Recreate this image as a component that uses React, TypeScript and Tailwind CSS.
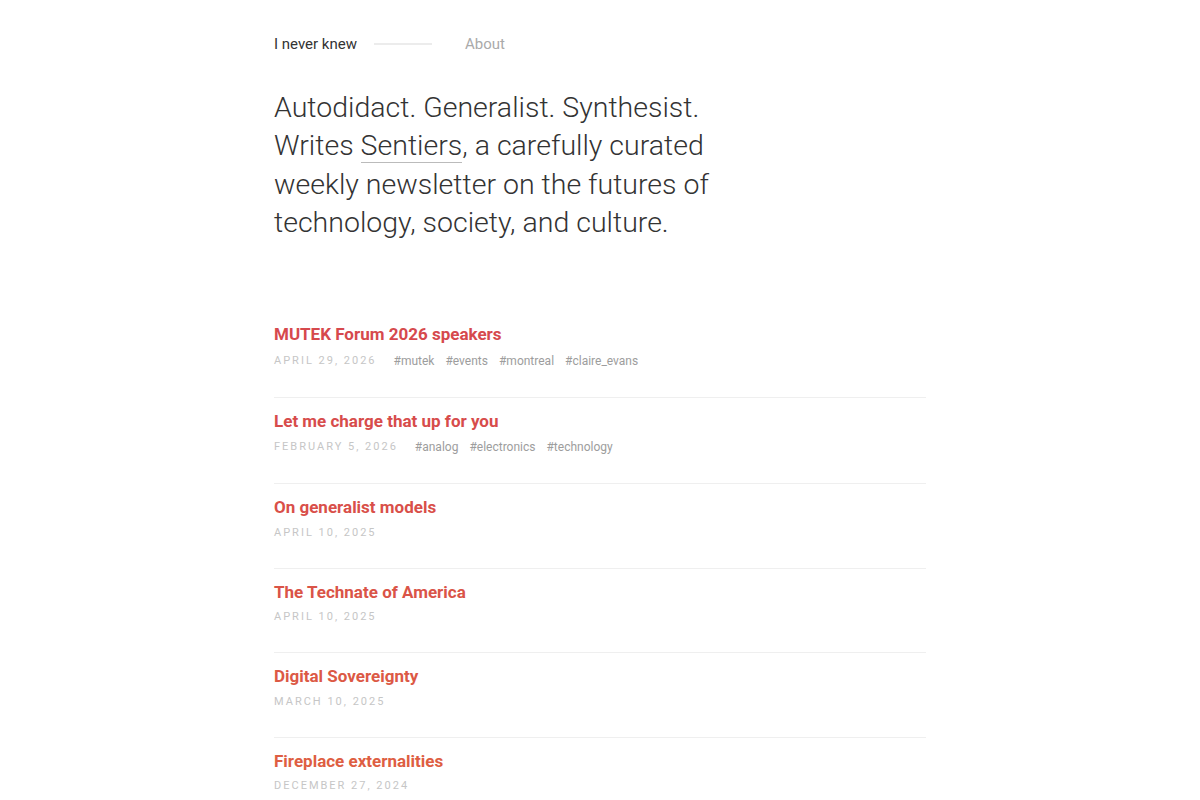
import React from "react";

type Post = { title: string; date: string; tags: string[]; color: string };

const posts: Post[] = [
  { title: "MUTEK Forum 2026 speakers", date: "April 29, 2026", tags: ["mutek", "events", "montreal", "claire_evans"], color: "text-[#d6494d]" },
  { title: "Let me charge that up for you", date: "February 5, 2026", tags: ["analog", "electronics", "technology"], color: "text-[#d74c4b]" },
  { title: "On generalist models", date: "April 10, 2025", tags: [], color: "text-[#d94f49]" },
  { title: "The Technate of America", date: "April 10, 2025", tags: [], color: "text-[#da5447]" },
  { title: "Digital Sovereignty", date: "March 10, 2025", tags: [], color: "text-[#dc5945]" },
  { title: "Fireplace externalities", date: "December 27, 2024", tags: [], color: "text-[#de5e42]" },
];

export default function App() {
  return (
    <div className="min-h-screen bg-white font-['Roboto','Liberation_Sans',sans-serif] text-[#333]">
      <div className="mx-auto w-[652px] pt-8">
        <nav className="flex items-center h-6 text-[15px]">
          <span className="text-[#333]">I never knew</span>
          <span className="ml-[17px] h-[2px] w-[58px] bg-[#ececec]" />
          <span className="ml-[33px] text-[#aaa]">About</span>
        </nav>
        <p className="mt-[33px] w-[456px] text-[28.5px] leading-[38.3px] font-light text-[#333]">
          Autodidact. Generalist. Synthesist. Writes{" "}
          <span className="border-b border-[#bbb]">Sentiers</span>, a carefully curated weekly newsletter on the
          futures of technology, society, and culture.
        </p>
        <ul className="mt-[69px]">
          {posts.map((p, i) => (
            <li
              key={i}
              className={`pt-[11px] pb-[23px] ${i < posts.length - 1 ? "border-b border-[#efefef]" : ""}`}
            >
              <div className={`text-[17px] leading-6 font-bold ${p.color}`}>{p.title}</div>
              <div className={`flex items-center pt-[2px] ${p.tags.length > 0 ? "h-[27.5px]" : "h-[25.5px]"}`}>
                <span className="text-[11px] uppercase tracking-[2px] text-[#c6c6c6]">{p.date}</span>
                {p.tags.length > 0 && (
                  <span className="ml-[17px] flex gap-[11px] text-[12px] text-[#9d9d9d]">
                    {p.tags.map((t) => (
                      <span key={t}>#{t}</span>
                    ))}
                  </span>
                )}
              </div>
            </li>
          ))}
        </ul>
      </div>
    </div>
  );
}
